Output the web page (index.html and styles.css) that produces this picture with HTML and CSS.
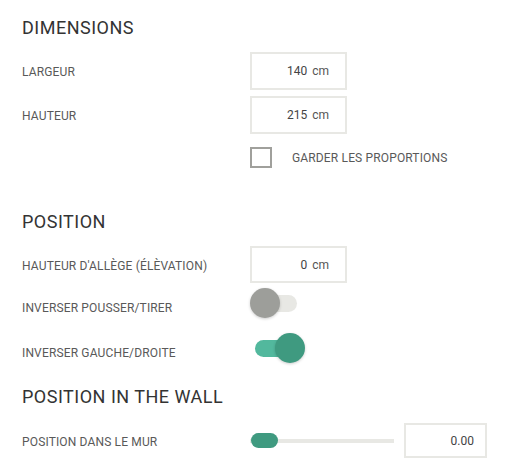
FILE: index.html
```html
<!DOCTYPE html>
<html lang="fr">
<head>
<meta charset="utf-8">
<link rel="stylesheet" href="styles.css">
</head>
<body>
<div class="panel">
  <section class="section">
    <h2 class="title">DIMENSIONS</h2>
    <div class="row row-first">
      <span class="label">LARGEUR</span>
      <div class="field"><span class="value">140</span><span class="unit">cm</span></div>
    </div>
    <div class="row row-next">
      <span class="label">HAUTEUR</span>
      <div class="field"><span class="value">215</span><span class="unit">cm</span></div>
    </div>
    <div class="row row-check">
      <span class="label"></span>
      <span class="checkbox"></span>
      <span class="check-label">GARDER LES PROPORTIONS</span>
    </div>
  </section>

  <section class="section section-position">
    <h2 class="title">POSITION</h2>
    <div class="row row-first">
      <span class="label">HAUTEUR D'ALLÈGE (ÉLÈVATION)</span>
      <div class="field field-short"><span class="value">0</span><span class="unit">cm</span></div>
    </div>
    <div class="row row-toggle1">
      <span class="label label-low">INVERSER POUSSER/TIRER</span>
      <span class="toggle"><span class="track"></span><span class="knob"></span></span>
    </div>
    <div class="row row-toggle2">
      <span class="label label-low">INVERSER GAUCHE/DROITE</span>
      <span class="toggle toggle-on"><span class="track"></span><span class="knob"></span></span>
    </div>
  </section>

  <section class="section section-wall">
    <h2 class="title">POSITION IN THE WALL</h2>
    <div class="row row-slider">
      <span class="label">POSITION DANS LE MUR</span>
      <span class="slider"><span class="slider-track"></span><span class="slider-thumb"></span></span>
      <div class="field field-num"><span class="value">0.00</span></div>
    </div>
  </section>
</div>
</body>
</html>
```
FILE: styles.css
```css
html, body {
  margin: 0;
  padding: 0;
  background: #ffffff;
}
body {
  font-family: Roboto, "Liberation Sans", sans-serif;
  color: #555555;
}
.panel {
  padding: 16px 0 0 22px;
}
.section {
  margin: 0;
}
.title {
  margin: 0;
  font-size: 18px;
  line-height: 24px;
  font-weight: 400;
  color: #333333;
  letter-spacing: 0.5px;
}
.section-position {
  margin-top: 42px;
}
.section-wall {
  margin-top: 22px;
}
.row {
  display: flex;
  align-items: center;
}
.row-first {
  margin-top: 12px;
}
.row-next {
  margin-top: 6px;
}
.row-check {
  margin-top: 13px;
}
.row-toggle1 {
  margin-top: 5px;
}
.row-toggle2 {
  margin-top: 15px;
}
.row-slider {
  margin-top: 14px;
}
.label {
  width: 228px;
  flex: none;
  font-size: 12px;
  color: #595959;
  letter-spacing: 0.15px;
  padding-top: 2px;
}
.label-low {
  margin-top: 10px;
  padding-top: 0;
}
.field {
  box-sizing: border-box;
  width: 97px;
  height: 38px;
  border: 2px solid #e8e8e4;
  display: flex;
  align-items: center;
  justify-content: flex-end;
  padding-right: 16px;
  font-size: 12px;
  color: #444;
}
.field-short {
  height: 37px;
}
.value {
  color: #444444;
}
.unit {
  margin-left: 5px;
  color: #555555;
}
.field-num {
  width: 83px;
  height: 35px;
  padding-right: 11px;
  margin-left: 10px;
}
.checkbox {
  box-sizing: border-box;
  width: 22px;
  height: 21px;
  border: 2px solid #a0a09c;
  flex: none;
}
.check-label {
  margin-left: 20px;
  font-size: 12px;
  color: #595959;
  letter-spacing: 0.15px;
}
.toggle {
  position: relative;
  width: 55px;
  height: 30px;
  flex: none;
}
.track {
  position: absolute;
  left: 5px;
  top: 7px;
  width: 42px;
  height: 17px;
  border-radius: 9px;
  background: #e8e8e4;
}
.knob {
  position: absolute;
  left: 0;
  top: 0;
  width: 30px;
  height: 30px;
  border-radius: 50%;
  background: #9d9e9a;
  box-shadow: 0 1px 3px rgba(0, 0, 0, 0.2);
}
.toggle-on .track {
  background: #52b89d;
}
.toggle-on .knob {
  left: 25px;
  background: #3f9a80;
}
.slider {
  position: relative;
  width: 144px;
  height: 16px;
  flex: none;
}
.slider-track {
  position: absolute;
  left: 0;
  right: 0;
  top: 6px;
  height: 4px;
  background: #e8e8e4;
}
.slider-thumb {
  position: absolute;
  left: 1px;
  top: 0;
  width: 27px;
  height: 15px;
  border-radius: 8px;
  background: #3f9a80;
}
```
